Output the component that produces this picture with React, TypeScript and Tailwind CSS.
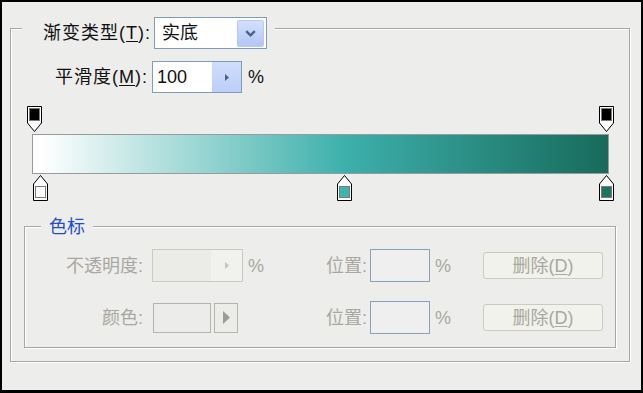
import React from 'react';

interface ColorStop {
  x: number;
  color: string;
}

// px offsets inside the stop tracks (track starts at x=26)
const opacityStops = [0, 572];
const colorStops: ColorStop[] = [
  { x: 6, color: '#ffffff' },
  { x: 310, color: '#3db4af' },
  { x: 572, color: '#1b7464' },
];

function OpacityStop({ x }: { x: number }) {
  return (
    <svg className="absolute top-0" style={{ left: x }} width="17" height="27" viewBox="0 0 17 27">
      <path d="M1.5 0.5 H15.5 V17 L8.5 25.5 L1.5 17 Z" fill="#ffffff" stroke="#000000" />
      <rect x="3.5" y="2.5" width="10" height="12" fill="#000000" stroke="#7a7a7a" />
    </svg>
  );
}

function ColorStopMarker({ stop }: { stop: ColorStop }) {
  return (
    <svg className="absolute top-[1px]" style={{ left: stop.x }} width="17" height="27" viewBox="0 0 17 27">
      <path d="M8.5 0.5 L15.5 9 V25.5 H1.5 V9 Z" fill="#ffffff" stroke="#000000" />
      <rect x="3.5" y="11.5" width="10" height="11" fill={stop.color} stroke="#7a7a7a" />
    </svg>
  );
}

function DeleteButton() {
  return (
    <button
      type="button"
      disabled
      className="w-[120px] h-[27px] rounded-[3px] border border-[#cbcbc0] bg-[#f2f2ec] text-[#a8a89e] flex items-center justify-center"
    >
      删除(<span className="underline underline-offset-2">D</span>)
    </button>
  );
}

function PositionField() {
  return (
    <>
      <span className="w-[98px] text-right pr-[3px] text-[#a8a8a0]">位置:</span>
      <div className="w-[60px] h-[33px] border border-[#8b9fbd] bg-[#efefef]" />
      <span className="ml-[5px] w-[48px] text-[#a8a8a0]">%</span>
      <DeleteButton />
    </>
  );
}

export default function App() {
  return (
    <div className="w-[643px] h-[393px] bg-black pt-[2px] pl-[2px] font-['Liberation_Sans','Noto_Sans_CJK_SC',sans-serif] text-[18px] leading-none text-[#111]">
      <div className="w-[639px] h-[388px] bg-[#ededec] pt-[26px] pl-[8px]">
        {/* Gradient group */}
        <div className="w-[620px] h-[334px] border border-[#a6a6a6] shadow-[inset_1px_1px_0_#ffffff,1px_1px_0_#ffffff] flex flex-col">
          {/* Type row (sits on the frame line) */}
          <div className="-mt-[12px] ml-[11px] h-[32px] flex items-center self-start bg-[#ededec] pr-[8px]">
            <span className="w-[132px] text-right pr-[3px] tracking-[1px]">
              渐变类型(<span className="underline underline-offset-2">T</span>):
            </span>
            <div className="w-[113px] h-[32px] border border-[#7f9db9] bg-white flex items-center justify-between pl-[7px] pr-[2px]">
              <span>实底</span>
              <div className="w-[27px] h-[27px] rounded-[2px] border border-[#b9cbf5] bg-gradient-to-b from-[#d3e0fd] to-[#b3c6f5] flex items-center justify-center">
                <svg width="11" height="7" viewBox="0 0 11 7">
                  <path d="M1.2 1.2 L5.5 5.3 L9.8 1.2" fill="none" stroke="#4d6185" strokeWidth="2.4" />
                </svg>
              </div>
            </div>
          </div>

          {/* Smoothness row */}
          <div className="mt-[12px] h-[32px] flex items-center">
            <span className="w-[141px] text-right pr-[4px] tracking-[1px]">
              平滑度(<span className="underline underline-offset-2">M</span>):
            </span>
            <div className="w-[90px] h-[32px] border border-[#7f9db9] bg-white flex items-stretch">
              <span className="flex-1 flex items-center pl-[4px]">100</span>
              <div className="w-[29px] bg-gradient-to-b from-[#d0defd] to-[#bccef8] flex items-center justify-center">
                <svg width="6" height="9" viewBox="0 0 6 9">
                  <path d="M1 1 L5 4.5 L1 8 Z" fill="#4d6185" />
                </svg>
              </div>
            </div>
            <span className="ml-[6px]">%</span>
          </div>

          {/* Gradient bar with stops */}
          <div className="mt-[13px] ml-[15px] w-[590px] flex flex-col">
            <div className="relative h-[28px]">
              {opacityStops.map((x) => (
                <OpacityStop key={x} x={x} />
              ))}
            </div>
            <div className="ml-[6px] w-[577px] h-[40px] border border-[#9a9a9a] bg-[linear-gradient(to_right,#ffffff_8px,#3db0ab_312px,#186b5c_574px)]" />
            <div className="relative h-[27px]">
              {colorStops.map((s) => (
                <ColorStopMarker key={s.x} stop={s} />
              ))}
            </div>
          </div>

          {/* Color stop group */}
          <div className="mt-[25px] ml-[13px] w-[592px] h-[122px] border border-[#a6a6a6] shadow-[inset_1px_1px_0_#ffffff,1px_1px_0_#ffffff] flex flex-col">
            <div className="-mt-[12px] ml-[16px] h-[24px] self-start px-[8px] bg-[#ededec] flex items-center text-[#1f4fcf]">
              色标
            </div>

            <div className="mt-[10px] h-[33px] flex items-center">
              <div className="w-[247px] flex items-center">
                <span className="w-[127px] text-right pr-[9px] text-[#a8a8a0]">不透明度:</span>
                <div className="w-[91px] h-[33px] border border-[#cacac2] bg-[#ebebe8] flex items-stretch">
                  <span className="flex-1" />
                  <div className="w-[31px] bg-[#f1f1ee] flex items-center justify-center">
                    <svg width="6" height="9" viewBox="0 0 6 9">
                      <path d="M1 1 L5 4.5 L1 8 Z" fill="#c4c4bc" />
                    </svg>
                  </div>
                </div>
                <span className="ml-[5px] text-[#a8a8a0]">%</span>
              </div>
              <PositionField />
            </div>

            <div className="mt-[19px] h-[33px] flex items-center">
              <div className="w-[247px] flex items-center">
                <span className="w-[128px] text-right pr-[10px] text-[#a8a8a0]">颜色:</span>
                <div className="w-[58px] h-[30px] border border-[#b4b4ac] bg-[#ececea]" />
                <div className="ml-[3px] w-[24px] h-[30px] border border-[#b4b4ac] bg-[#ececea] flex items-center justify-center">
                  <svg width="9" height="15" viewBox="0 0 9 15">
                    <path d="M1 1 L8 7.5 L1 14 Z" fill="#9c9c94" />
                  </svg>
                </div>
              </div>
              <PositionField />
            </div>
          </div>
        </div>
      </div>
    </div>
  );
}
